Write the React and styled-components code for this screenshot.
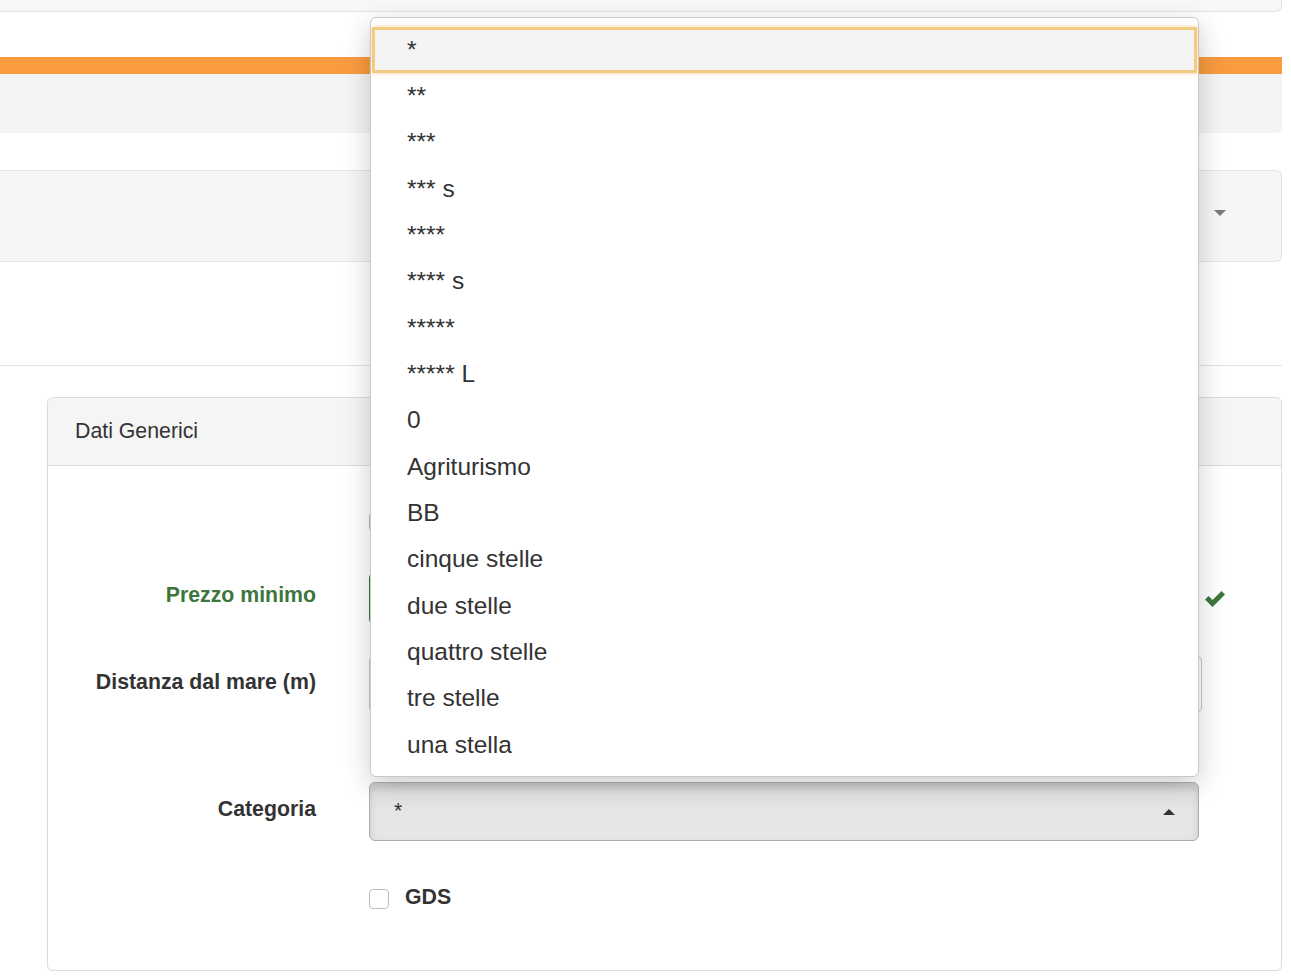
import React from 'react'
import styled, { createGlobalStyle } from 'styled-components'

const GlobalStyle = createGlobalStyle`
  html, body {
    margin: 0;
    padding: 0;
    background: #fff;
    font-family: "Liberation Sans", Arial, Helvetica, sans-serif;
    color: #333;
  }
`

const Page = styled.div`
  width: 1282px;
  display: flex;
  flex-direction: column;
`

const TopStrip = styled.div`
  height: 11px;
  background: #f8f8f8;
  border: 1px solid #e3e3e3;
  border-top: 0;
  border-left: 0;
  border-bottom-right-radius: 6px;
`

const StepBar = styled.div`
  margin-top: 45px;
  height: 59px;
  background: #f4f4f4;
  border-top: 17px solid #fa9b40;
  border-bottom-right-radius: 6px;
`

const FilterBox = styled.div`
  margin-top: 37px;
  box-sizing: border-box;
  height: 92px;
  background: #f6f6f6;
  border: 1px solid #e3e3e3;
  border-left: 0;
  border-radius: 0 6px 6px 0;
  display: flex;
  align-items: center;
  justify-content: flex-end;
  padding: 0 55px 6px 0;
`

const Caret = styled.span`
  width: 0;
  height: 0;
  border-left: 6px solid transparent;
  border-right: 6px solid transparent;
  ${p => p.$up
    ? `border-bottom: 6px solid ${p.$color};`
    : `border-top: 6px solid ${p.$color};`}
`

const Rule = styled.hr`
  margin: 103px 0 0;
  border: 0;
  border-top: 1px solid #e3e3e3;
  height: 0;
`

const Panel = styled.section`
  margin: 31px 0 0 47px;
  border: 1px solid #dcdcdc;
  border-radius: 6px;
  background: #fff;
  box-shadow: 0 1px 2px rgba(0, 0, 0, 0.05);
`

const PanelHeading = styled.div`
  height: 67px;
  display: flex;
  align-items: center;
  padding-left: 27px;
  background: #f5f5f5;
  border-bottom: 1px solid #dcdcdc;
  border-radius: 6px 6px 0 0;
  font-size: 21.3px;
  color: #333;
`

const PanelBody = styled.div`
  padding: 46px 0 63px;
  display: flex;
  flex-direction: column;
`

const FormRow = styled.div`
  display: grid;
  grid-template-columns: 268px 830px;
  column-gap: 53px;
  margin-top: ${p => p.$gap || 0}px;
  position: relative;
`

const Label = styled.label`
  text-align: right;
  font-weight: bold;
  font-size: 21.3px;
  line-height: 30px;
  padding-top: ${p => p.$pt || 0}px;
  color: ${p => (p.$ok ? '#3c763d' : '#333')};
`

const TextInput = styled.div`
  height: ${p => p.$h}px;
  box-sizing: border-box;
  width: ${p => p.$w || 830}px;
  border: 1px solid ${p => (p.$ok ? '#3c763d' : '#ccc')};
  border-radius: 6px;
  background: #fff;
  box-shadow: inset 0 1px 1px rgba(0, 0, 0, 0.075);
`

const Feedback = styled.span`
  position: absolute;
  left: 1156px;
  top: 18px;
  display: flex;
`

const CheckRow = styled.div`
  display: flex;
  align-items: center;
  gap: 16px;
  height: 20px;
`

const CheckBox = styled.span`
  width: 18px;
  height: 18px;
  border: 1px solid #bdbdbd;
  border-radius: 4px;
  background: #fff;
  flex: none;
  margin-top: ${p => p.$mt || 0}px;
`

const CheckText = styled.span`
  font-weight: bold;
  font-size: 21.3px;
  color: #333;
`

const SelectWrap = styled.div`
  position: relative;
`

const SelectButton = styled.div`
  height: 59px;
  box-sizing: border-box;
  border: 1px solid #adadad;
  border-radius: 6px;
  background: #e6e6e6;
  box-shadow: inset 0 5px 8px rgba(0, 0, 0, 0.14);
  display: flex;
  align-items: center;
  justify-content: space-between;
  padding: 0 23px 0 24px;
  font-size: 21.3px;
  color: #333;
`

const Menu = styled.ul`
  position: absolute;
  left: 1px;
  right: 0;
  bottom: calc(100% + 5px);
  margin: 0;
  padding: 9px 1px 8px;
  list-style: none;
  background: #fff;
  border: 1px solid #c9c9c9;
  border-radius: 6px;
  box-shadow: 0 8px 28px rgba(0, 0, 0, 0.2);
  z-index: 5;
`

const MenuItem = styled.li`
  height: 46.33px;
  line-height: 46.33px;
  box-sizing: border-box;
  padding-left: 35px;
  font-size: 24.5px;
  color: #333;
  white-space: nowrap;
  ${p => p.$active && `
    background: #f4f4f4;
    border: 3px solid #f4cb82;
    box-shadow: 0 0 4px rgba(245, 180, 90, 0.6);
    line-height: 40.33px;
    padding-left: 32px;
  `}
`

const options = [
  '*', '**', '***', '*** s', '****', '**** s', '*****', '***** L',
  '0', 'Agriturismo', 'BB', 'cinque stelle', 'due stelle',
  'quattro stelle', 'tre stelle', 'una stella'
]

const OkIcon = () => (
  <svg width="22" height="18" viewBox="0 0 22 18">
    <path d="M1 9.5 L4.5 6 L8.5 10 L17.5 1 L21 4.5 L8.5 17 Z" fill="#3c763d" />
  </svg>
)

export default function App() {
  return (
    <Page>
      <GlobalStyle />
      <TopStrip />
      <StepBar />
      <FilterBox>
        <Caret $color="#7a7a7a" />
      </FilterBox>
      <Rule />
      <Panel>
        <PanelHeading>Dati Generici</PanelHeading>
        <PanelBody>
          <FormRow>
            <span />
            <CheckRow>
              <CheckBox />
            </CheckRow>
          </FormRow>

          <FormRow $gap={40}>
            <Label $ok $pt={8}>Prezzo minimo</Label>
            <TextInput $ok $h={53} />
            <Feedback><OkIcon /></Feedback>
          </FormRow>

          <FormRow $gap={30}>
            <Label $pt={12}>Distanza dal mare (m)</Label>
            <TextInput $h={58} $w={833} />
          </FormRow>

          <FormRow $gap={69}>
            <Label $pt={12}>Categoria</Label>
            <SelectWrap>
              <Menu>
                {options.map((o, i) => (
                  <MenuItem key={o} $active={i === 0}>{o}</MenuItem>
                ))}
              </Menu>
              <SelectButton>
                <span>*</span>
                <Caret $up $color="#333" />
              </SelectButton>
            </SelectWrap>
          </FormRow>

          <FormRow $gap={46}>
            <span />
            <CheckRow>
              <CheckBox $mt={4} />
              <CheckText>GDS</CheckText>
            </CheckRow>
          </FormRow>
        </PanelBody>
      </Panel>
    </Page>
  )
}
